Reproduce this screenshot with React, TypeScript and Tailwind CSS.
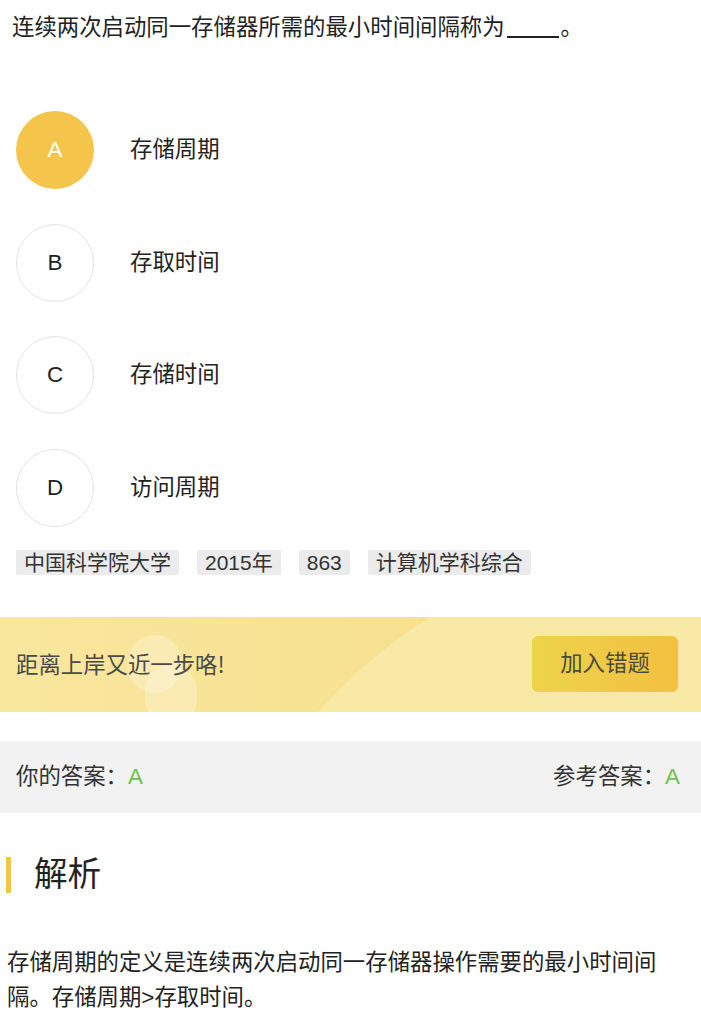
import React from "react";

const options = [
  { key: "A", text: "存储周期", picked: true },
  { key: "B", text: "存取时间", picked: false },
  { key: "C", text: "存储时间", picked: false },
  { key: "D", text: "访问周期", picked: false },
];

const tags = ["中国科学院大学", "2015年", "863", "计算机学科综合"];

export default function App() {
  return (
    <div
      className="min-h-screen w-[701px] bg-white text-[#222] overflow-hidden"
      style={{ fontFamily: '"Liberation Sans", "Noto Sans CJK SC", sans-serif' }}
    >
      <div className="px-3 pt-[13px] text-[22.4px] leading-[30px]">
        连续两次启动同一存储器所需的最小时间间隔称为
        <span className="relative top-[3px] mx-[2px] inline-block h-[20px] w-[52px] border-b-2 border-[#222] align-baseline" />。
      </div>

      <div className="mt-[68px] flex flex-col gap-[34.5px] px-4">
        {options.map((o) => (
          <div key={o.key} className="flex items-center">
            <div
              className={
                o.picked
                  ? "flex h-[78px] w-[78px] shrink-0 items-center justify-center rounded-full bg-[#f4c54a] text-[22.4px] text-white"
                  : "flex h-[78px] w-[78px] shrink-0 items-center justify-center rounded-full border border-[#e3e3e3] text-[22.4px] text-[#222]"
              }
            >
              {o.key}
            </div>
            <div className="ml-9 text-[22.4px]">{o.text}</div>
          </div>
        ))}
      </div>

      <div className="mt-[23px] flex gap-[18px] px-4">
        {tags.map((t) => (
          <span key={t} className="rounded-[2px] bg-[#ebebeb] px-2 text-[21px] leading-[25px] text-[#333]">
            {t}
          </span>
        ))}
      </div>

      <div className="relative mt-[42px] flex h-[95px] items-center justify-between overflow-hidden bg-gradient-to-r from-[#f9e79e] to-[#f6dc86] px-4">
        <div className="absolute left-[190px] top-[-77px] h-[1020px] w-[1020px] rounded-full bg-[#f9e9a7]" />
        <div className="absolute left-[127px] top-[18px] h-[58px] w-[55px] rounded-full bg-white/25" />
        <div className="absolute left-[145px] top-[48px] h-[60px] w-[52px] rounded-full bg-white/25" />
        <span className="relative text-[22.4px] text-[#4a4a4a]" style={{ fontFamily: '"Noto Sans CJK SC", sans-serif' }}>
          距离上岸又近一步咯!
        </span>
        <button className="relative mr-[7px] h-[56px] w-[146px] rounded-[6px] bg-gradient-to-r from-[#edd34b] to-[#f2c041] text-[22.4px] text-[#4a4a3f]">
          加入错题
        </button>
      </div>

      <div className="mt-[29px] flex h-[72px] items-center justify-between bg-[#f2f2f2] px-4 text-[22.4px] text-[#333]">
        <span>
          你的答案：<span className="text-[#6cc24a]">A</span>
        </span>
        <span className="mr-[5px]">
          参考答案：<span className="text-[#6cc24a]">A</span>
        </span>
      </div>

      <div className="mt-[44px] flex h-[36px] items-center pl-[6px]">
        <div className="h-[36px] w-[5px] bg-[#f4c54a]" />
        <span className="ml-[23px] text-[33.6px] leading-none">解析</span>
      </div>

      <div className="mt-[52px] pl-[7px] pr-[30px] text-[22.4px] leading-[35px] text-[#222]">
        存储周期的定义是连续两次启动同一存储器操作需要的最小时间间隔。存储周期&gt;存取时间。
      </div>
    </div>
  );
}
